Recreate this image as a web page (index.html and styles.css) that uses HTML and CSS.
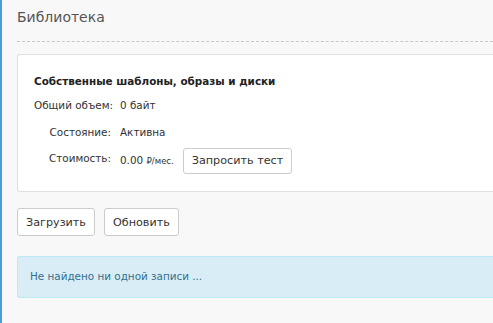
FILE: index.html
```html
<!DOCTYPE html>
<html lang="ru">
<head>
  <meta charset="UTF-8" />
  <title>Библиотека</title>
  <link rel="stylesheet" href="styles.css">
</head>
<body>
  <div class="page">
    <h1 class="page-title">Библиотека</h1>

    <div class="card">
      <h4 class="card-title">Собственные шаблоны, образы и диски</h4>
      <div class="info-row">
        <div class="label">Общий объем:</div>
        <div class="value">0 байт</div>
      </div>
      <div class="info-row">
        <div class="label">Состояние:</div>
        <div class="value">Активна</div>
      </div>
      <div class="info-row price-row">
        <div class="label">Стоимость:</div>
        <div class="value">0.00 <span class="unit">₽/мес.</span></div>
        <button class="btn">Запросить тест</button>
      </div>
    </div>

    <div class="actions">
      <button class="btn">Загрузить</button>
      <button class="btn">Обновить</button>
    </div>

    <div class="alert">Не найдено ни одной записи ...</div>
  </div>
</body>
</html>
```

FILE: styles.css
```css
* {
  margin: 0;
  padding: 0;
  box-sizing: border-box;
}

body {
  background: #f8f8f8;
  font-family: 'DejaVu Sans', Verdana, sans-serif;
  font-size: 10.4px;
  line-height: 13px;
  color: #333;
  border-left: 2px solid #4a9ed4;
  min-height: 100vh;
}

.page {
  padding: 0 0 0 15px;
}

.page-title {
  font-size: 14px;
  line-height: 18px;
  font-weight: normal;
  color: #555;
  padding: 8px 0 15px;
  border-bottom: 1px dashed #c8c8c8;
  margin-bottom: 12px;
}

.card {
  background: #fff;
  border: 1px solid #e0e0e0;
  border-right: none;
  border-radius: 3px 0 0 3px;
  padding: 20px 16px 17px;
}

.card-title {
  font-size: 10.4px;
  font-weight: bold;
  color: #222;
  margin-bottom: 4px;
}

.info-row {
  display: flex;
  align-items: center;
  gap: 9px;
  min-height: 27px;
  white-space: nowrap;
}

.label {
  width: 77px;
  text-align: right;
  color: #333;
}

.value {
  color: #333;
}

.unit {
  font-size: 8.5px;
}

.price-row {
  margin-top: 1px;
}

.price-row .label {
  margin-top: -5px;
}

.btn {
  font-family: inherit;
  font-size: 11.2px;
  color: #333;
  background: #fff;
  border: 1px solid #ccc;
  border-radius: 3px;
  padding: 0 8px;
  height: 28px;
  cursor: pointer;
}

.price-row .btn {
  height: 26px;
}

.actions {
  display: flex;
  gap: 9px;
  margin-top: 16px;
}

.alert {
  margin-top: 20px;
  background: #d9edf7;
  border: 1px solid #bce8f1;
  border-right: none;
  border-radius: 3px 0 0 3px;
  color: #31708f;
  padding: 13px 12px 14px;
}
```
